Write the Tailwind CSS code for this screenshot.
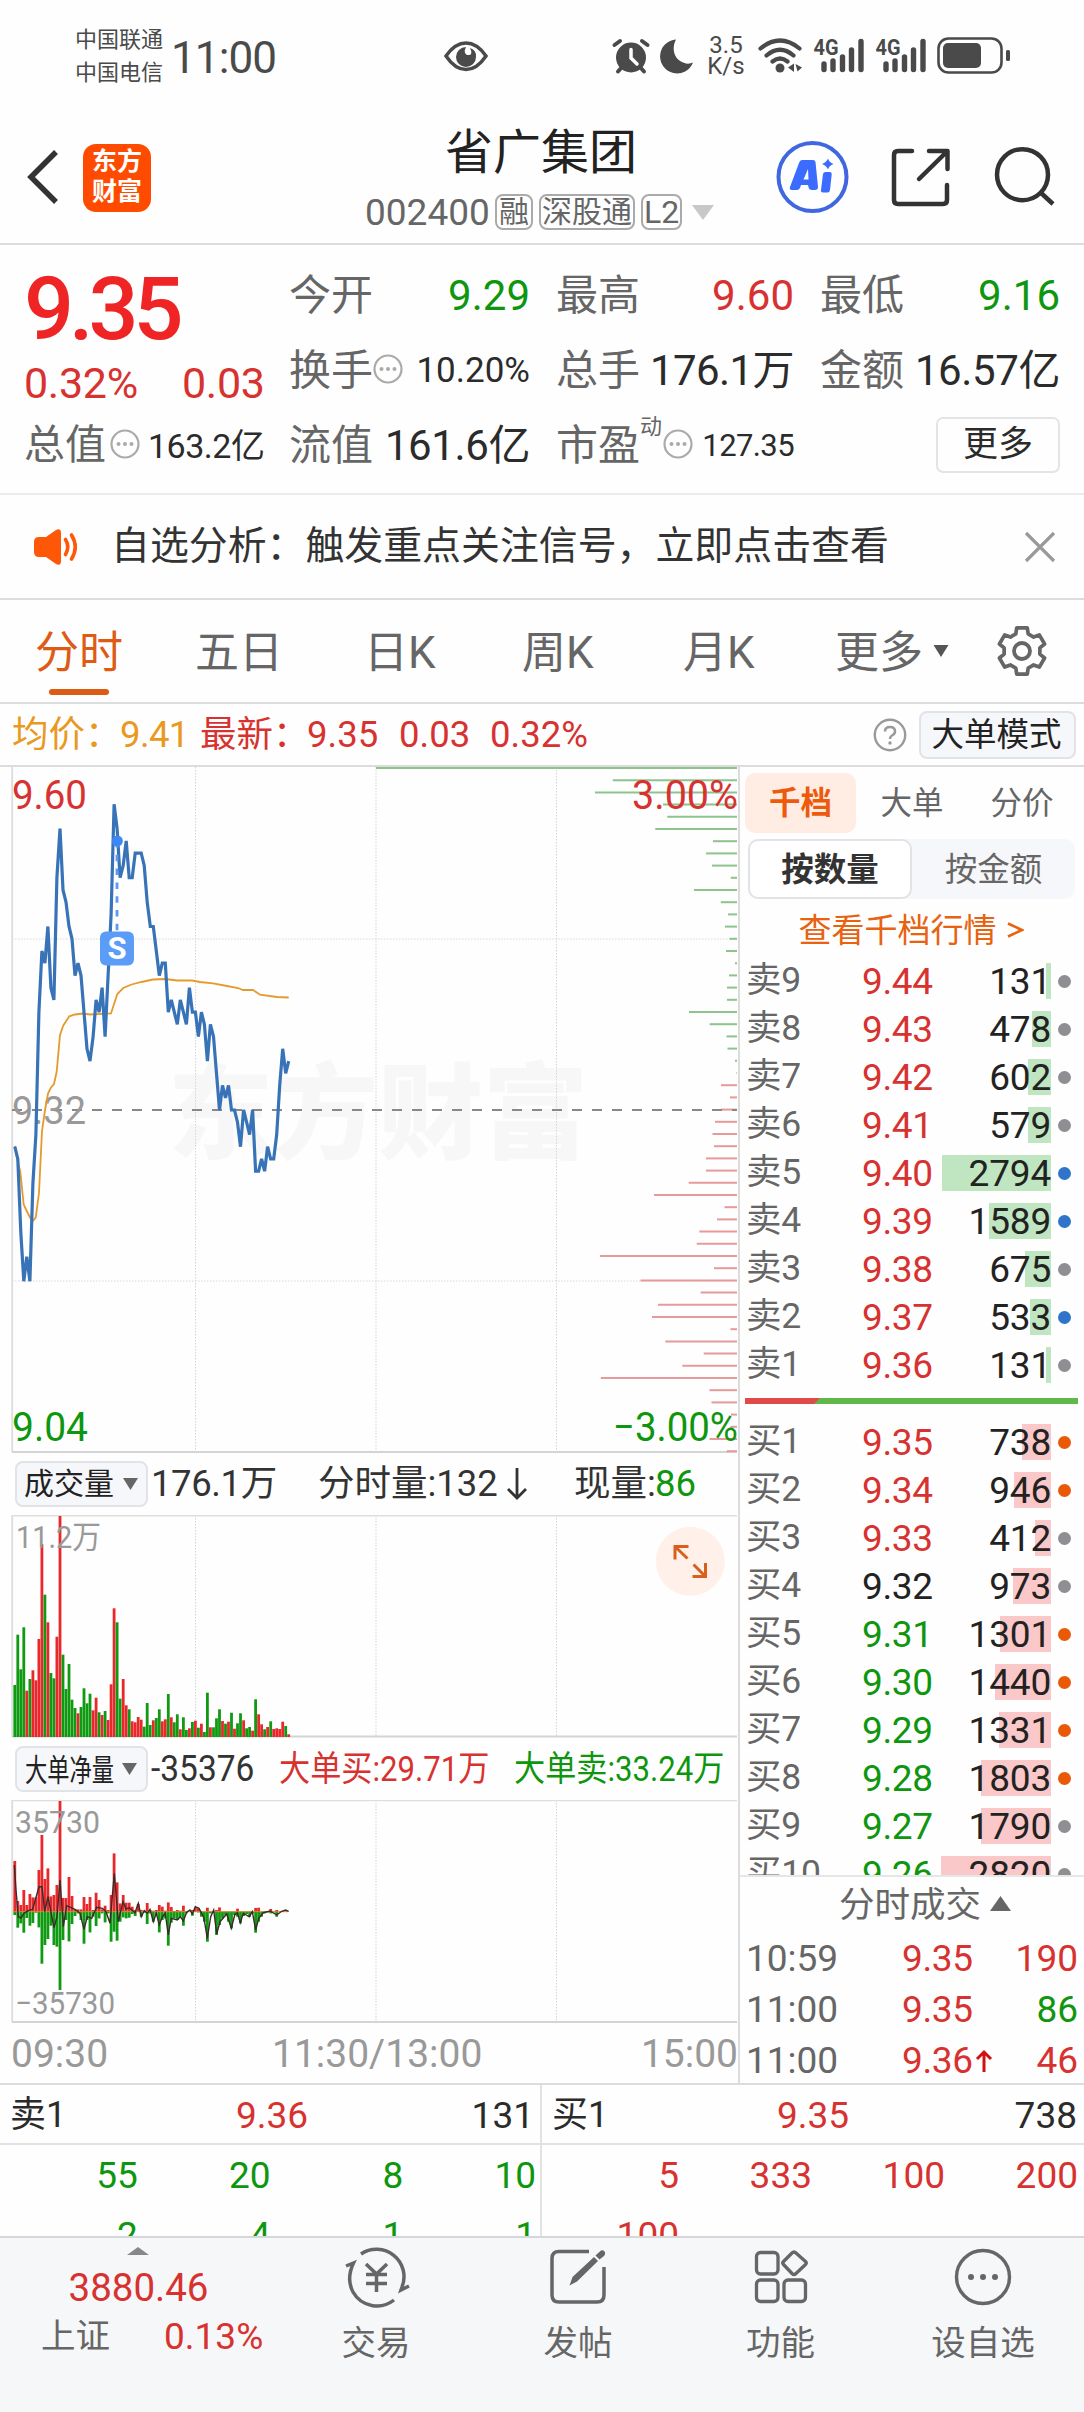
<!DOCTYPE html>
<html lang="zh-CN">
<head>
<meta charset="utf-8">
<title>省广集团 002400</title>
<script src="https://cdn.jsdelivr.net/npm/@tailwindcss/browser@4"></script>
</head>
<body class="bg-white">
<div class="w-[1084px] h-[2412px] overflow-hidden flex flex-col bg-[#fefefe] text-[#2b2b2b] leading-none whitespace-nowrap font-['Roboto','Noto_Sans_CJK_SC',sans-serif]">

  <!-- status bar -->
  <div class="h-[112px] shrink-0 flex items-center pl-[75px] text-[#4a4a4a]">
    <div class="w-[96px] text-[22px] leading-[33px]"><div>中国联通</div><div>中国电信</div></div>
    <div class="w-[272px] text-[44px] tracking-[-0.9px] pt-[4px]">11:00</div>
    <svg class="w-[46px] h-[34px]" viewBox="443 39 46 34"><path d="M446 56Q455 43 466 43T486 56Q477 69.500 466 69.500T446 56Z" fill="none" stroke="#4a4a4a" stroke-width="3.500"/><path d="M466 47A10 10 0 1 0 476 57A8 8 0 0 0 470 48Q474 56 467 55Q463 53 466 47Z" fill="#4a4a4a"/></svg>
    <svg class="w-[40px] h-[40px] ml-[122px]" viewBox="611 36 40 40"><circle cx="631" cy="57.500" r="15" fill="#4a4a4a"/><path d="M631 49.500V58L637 64" fill="none" stroke="#fff" stroke-width="3.500" stroke-linecap="round"/><path d="M614.500 45L620 41M647.500 45L642 41M618 71.500L622 67M644 71.500L640 67" stroke="#4a4a4a" stroke-width="4" stroke-linecap="round"/></svg>
    <svg class="w-[36px] h-[40px] ml-[8px]" viewBox="659 36 36 40"><path d="M676 39.500A17 17 0 1 0 693 62.500Q690 64 686 63.500C674 61 671 49 676 39.500Z" fill="#4a4a4a"/></svg>
    <div class="w-[62px] text-[24px] leading-[21px] text-center"><div>3.5</div><div>K/s</div></div>
    <svg class="w-[46px] h-[38px] " viewBox="756 37 46 38"><g fill="none" stroke="#4a4a4a" stroke-width="4.200" stroke-linecap="round"><path d="M759.500 48.500Q779 32.500 798.500 48.500M765.500 55.500Q779 44 792.500 55.500M771.500 61.500Q779 55.500 786.500 61.500"/></g><circle cx="779" cy="68" r="4.500" fill="#4a4a4a"/><path d="M787 67.500L793 63.500V72ZM794.500 64L801 67.500L796.500 71.500Z" fill="#4a4a4a"/></svg>
    <svg class="w-[52px] h-[38px] ml-[10px] overflow-visible" viewBox="812 37 52 38"><text x="812.500" y="55" font-size="22" font-weight="700" textLength="25" lengthAdjust="spacingAndGlyphs" fill="#4a4a4a">4G</text><path d="M823 64V69.500M832 61V69.500M841.500 57V69.500M850.500 50V69.500M860 41.500V69.500" stroke="#4a4a4a" stroke-width="5.400" stroke-linecap="round"/></svg>
    <svg class="w-[52px] h-[38px] ml-[10px] overflow-visible" viewBox="812 37 52 38"><text x="812.500" y="55" font-size="22" font-weight="700" textLength="25" lengthAdjust="spacingAndGlyphs" fill="#4a4a4a">4G</text><path d="M823 64V69.500M832 61V69.500M841.500 57V69.500M850.500 50V69.500M860 41.500V69.500" stroke="#4a4a4a" stroke-width="5.400" stroke-linecap="round"/></svg>
    <svg class="w-[76px] h-[40px] ml-[9px]" viewBox="936 36 76 40"><rect x="938.500" y="38.500" width="63" height="34" rx="10" fill="none" stroke="#4a4a4a" stroke-width="2.600"/><rect x="943" y="43" width="38" height="25" rx="5" fill="#4a4a4a"/><rect x="1006" y="50" width="4" height="11" rx="1.500" fill="#4a4a4a"/></svg>
  </div>

  <!-- title bar -->
  <div class="h-[133px] shrink-0 flex border-b-2 border-[#dcdcdc]">
    <svg class="w-[60px] h-[133px]" viewBox="0 112 60 133"><path d="M56 152L31 177L56 202" fill="none" stroke="#333" stroke-width="5.500"/></svg>
    <div class="ml-[23px] mt-[32px] w-[68px] h-[68px] rounded-[13px] bg-[#ff4b00] text-white text-[25px] font-bold leading-[30px] pt-[3px] text-center">东方<br>财富</div>
    <div class="ml-[211px] w-[356px] flex flex-col pt-[15px]">
      <div class="text-[48px] h-[52px] leading-[52px] pl-[83px] text-[#222]">省广集团</div>
      <div class="flex items-center h-[36px] mt-[15px] pl-[3px] text-[#666]">
        <span class="w-[130px] text-[37px]">002400</span>
        <span class="w-[38px] h-[36px] border-2 border-[#aaa] rounded-[8px] text-[30px] flex items-center justify-center">融</span>
        <span class="ml-[6px] w-[96px] h-[36px] border-2 border-[#aaa] rounded-[8px] text-[30px] flex items-center justify-center">深股通</span>
        <span class="ml-[6px] w-[41px] h-[36px] border-2 border-[#aaa] rounded-[8px] text-[32px] flex items-center justify-center">L2</span>
        <svg class="ml-[10px] w-[22px] h-[15px]" viewBox="0 0 22 15"><path d="M0 0H22L11 15Z" fill="#c8c8c8"/></svg>
      </div>
    </div>
    <svg class="ml-[56px] w-[76px] h-[131px]" viewBox="774 112 76 131"><circle cx="812.500" cy="177" r="34" fill="none" stroke="#4067e0" stroke-width="4"/><path fill="#3b6bff" fill-rule="evenodd" d="M802 160H813Q815 160 815.500 162L818 187Q818 190 815 190H812Q809 190 808.500 187L808 185H801L800 188Q799 190 797 190H792Q789 190 790 187L799 163Q800 160 802 160ZM808 169L803.500 179.500H808.500ZM823 174Q823.500 172 825.500 172H830Q832 172 831.700 174.500L830 190Q829.500 192.500 827.500 192.500H823Q820.700 192.500 821 190ZM828 158.500Q829 162 833.500 164Q829 165.500 828 169.500Q826.500 165.500 822 164Q826.500 162 828 158.500Z"/></svg>
    <svg class="ml-[37px] w-[70px] h-[131px]" viewBox="887 112 70 131"><g fill="none" stroke="#333" stroke-width="4.500" stroke-linecap="round" stroke-linejoin="round"><path d="M912 151H898Q894 151 894 155V200Q894 204 898 204H943Q947 204 947 200V185"/><path d="M929 151H947.500V169M946 152.500L919 179"/></g></svg>
    <svg class="ml-[33px] w-[74px] h-[131px]" viewBox="990 112 74 131"><circle cx="1022.500" cy="174.700" r="25.500" fill="none" stroke="#333" stroke-width="4.500"/><path d="M1040 192L1053 204" stroke="#333" stroke-width="4.500"/></svg>
  </div>

  <!-- quote summary -->
  <div class="h-[250px] shrink-0 flex pt-[13px] pl-[24px] border-b-2 border-[#ebebeb] text-[42px]">
    <div class="w-[265px] shrink-0">
      <div class="h-[101px] flex items-center text-[88px] font-medium tracking-[-5px] text-[#ee2524]">9.35</div>
      <div class="h-[49px] flex items-center text-[#d73230]"><span class="w-[158px] text-[43px] tracking-[-0.3px]">0.32%</span><span class="text-[43px] tracking-[-0.3px]">0.03</span></div>
      <div class="h-[75px] flex items-center"><span class="text-[#666] w-[86px] text-[41px]">总值</span><svg class="w-[30px] h-[30px] -mt-1" viewBox="0 0 30 30"><circle cx="15" cy="15" r="13.500" fill="none" stroke="#aaa" stroke-width="2.200"/><g fill="#aaa"><circle cx="8.500" cy="15" r="2"/><circle cx="15" cy="15" r="2"/><circle cx="21.500" cy="15" r="2"/></g></svg><span class="ml-[8px] text-[34px] tracking-[-0.5px]">163.2亿</span></div>
    </div>
    <div class="grid grid-cols-[241px_238px_240px] gap-x-[26px] auto-rows-[75px] [&>div]:flex [&>div]:items-center [&>div]:justify-between">
      <div><span class="text-[#666]">今开</span><span class="text-[#0f960f]">9.29</span></div>
      <div><span class="text-[#666]">最高</span><span class="text-[#d73230]">9.60</span></div>
      <div><span class="text-[#666]">最低</span><span class="text-[#0f960f]">9.16</span></div>
      <div><span class="text-[#666]">换手</span><svg class="w-[30px] h-[30px] -mt-1" viewBox="0 0 30 30"><circle cx="15" cy="15" r="13.500" fill="none" stroke="#aaa" stroke-width="2.200"/><g fill="#aaa"><circle cx="8.500" cy="15" r="2"/><circle cx="15" cy="15" r="2"/><circle cx="21.500" cy="15" r="2"/></g></svg><span class="ml-auto text-[35px]">10.20%</span></div>
      <div><span class="text-[#666]">总手</span><span class="tracking-[-0.6px]">176.1万</span></div>
      <div><span class="text-[#666]">金额</span><span class="tracking-[-0.4px]">16.57亿</span></div>
      <div><span class="text-[#666]">流值</span><span class="tracking-[-0.4px]">161.6亿</span></div>
      <div><span class="text-[#666]">市盈</span><span class="text-[#666] text-[22px] -mt-[38px]">动</span><svg class="w-[30px] h-[30px] -mt-1 ml-[1px]" viewBox="0 0 30 30"><circle cx="15" cy="15" r="13.500" fill="none" stroke="#aaa" stroke-width="2.200"/><g fill="#aaa"><circle cx="8.500" cy="15" r="2"/><circle cx="15" cy="15" r="2"/><circle cx="21.500" cy="15" r="2"/></g></svg><span class="ml-auto text-[31px] tracking-[-0.6px]">127.35</span></div>
      <div><span class="ml-auto -mt-[2px] w-[124px] h-[56px] border-2 border-[#e4e4e4] rounded-[7px] flex items-center justify-center text-[35px]">更多</span></div>
    </div>
  </div>

  <!-- notice -->
  <div class="h-[105px] shrink-0 flex items-center pl-[32px] border-b-2 border-[#dcdcdc]">
    <svg class="w-[50px] h-[44px]" viewBox="32 524 50 44"><path d="M34 541Q34 536 39 536H46L56 529Q61 526.500 61 532V560Q61 565.500 56 563L46 556H39Q34 556 34 551Z" fill="#ff5708"/><path d="M65.500 538.500Q70 546 65.500 553.500M71.500 534Q79 546 71.500 558" fill="none" stroke="#ff5708" stroke-width="3.600" stroke-linecap="round"/></svg>
    <span class="ml-[29px] text-[38.9px] text-[#333]">自选分析：触发重点关注信号，立即点击查看</span>
    <svg class="ml-auto mr-[28px] w-[32px] h-[32px]" viewBox="0 0 32 32"><path d="M2 2L30 30M30 2L2 30" stroke="#999" stroke-width="3.200"/></svg>
  </div>

  <!-- period tabs -->
  <div class="h-[104px] shrink-0 flex items-center border-b-2 border-[#dcdcdc] text-[44px] text-[#666]">
    <div class="w-[160px] pl-[35px] h-full flex flex-col text-[#dd5b14]"><span class="h-[89px] flex items-center pt-[17px]">分时</span><span class="ml-[14px] w-[60px] h-[6px] rounded-full bg-[#dd5b14]"></span></div>
    <div class="w-[203px] pl-[35px] pt-[3px]">五日</div>
    <div class="w-[159px] pl-[1px] pt-[3px]">日K</div>
    <div class="w-[161px] pt-[3px]">周K</div>
    <div class="w-[152px] pt-[3px]">月K</div>
    <div class="w-[98px] pt-[3px]">更多</div>
    <svg class="w-[16px] h-[12px]" viewBox="0 0 16 12"><path d="M0.500 0H15.500L8 12Z" fill="#555"/></svg>
    <svg class="ml-[45px] w-[56px] h-[56px]" viewBox="-28 -28 56 56"><path transform="scale(.93)" d="M-6.700-18.300L-5.700-24.800H5.700L6.700-18.300L12.500-14.950L18.600-17.300L24.300-7.500L19.200-3.350V3.350L24.300 7.500L18.600 17.300L12.500 14.950L6.700 18.300L5.700 24.800H-5.700L-6.700 18.300L-12.500 14.950L-18.600 17.300L-24.300 7.500L-19.200 3.350V-3.350L-24.300-7.500L-18.600-17.300L-12.500-14.950Z" fill="none" stroke="#666" stroke-width="4" stroke-linejoin="round"/><circle r="8" fill="none" stroke="#666" stroke-width="3.800"/></svg>
  </div>

  <!-- average / latest -->
  <div class="h-[63px] shrink-0 flex items-center pl-[12px] border-b-2 border-[#dcdcdc] text-[36.500px] text-[#d73230]">
    <span class="w-[108px] pt-[2px] text-[#e8991e]">均价：</span><span class="w-[80px] pt-[2px] text-[#e8991e] tracking-[-0.6px]">9.41</span>
    <span class="w-[107px] pt-[2px]">最新：</span><span class="w-[92px] pt-[2px]">9.35</span><span class="w-[91px] pt-[2px]">0.03</span><span class="pt-[2px]">0.32%</span>
    <svg class="ml-auto w-[34px] h-[34px]" viewBox="0 0 34 34"><circle cx="17" cy="17" r="15.200" fill="none" stroke="#999" stroke-width="2.400"/><path d="M12 13.500Q12 9 17 9T22 13.500Q22 16 19 17.500Q17 18.500 17 21" fill="none" stroke="#999" stroke-width="2.500"/><circle cx="17" cy="25" r="1.700" fill="#999"/></svg>
    <span class="ml-[12px] mr-[8px] w-[157px] h-[48px] rounded-[8px] border-2 border-[#e2e3e6] bg-[#f6f7fa] text-[#222] text-[32.500px] flex items-center justify-center pt-[2px] pr-[2px]">大单模式</span>
  </div>

  <!-- charts and order book -->
  <div class="h-[1318px] shrink-0 flex border-b-2 border-[#dcdcdc]">
    <div class="w-[740px] shrink-0 flex flex-col border-r-2 border-[#dcdcdc]">
      <svg id="price" class="w-[738px] h-[686px] shrink-0" viewBox="0 767 738 686"></svg>
      <div class="h-[62px] flex items-center pl-[15px] text-[36.500px] text-[#333]">
        <div class="w-[133px] h-[46px] border-2 border-[#e2e3e6] bg-[#f6f7fa] rounded-[8px] flex items-center pl-[7px] text-[30px] text-[#222]">成交量<svg class="ml-[9px] w-[15px] h-[12px]" viewBox="0 0 15 12"><path d="M0 0H15L7.500 12Z" fill="#666"/></svg></div>
        <span class="ml-[3px] w-[167px] pt-[1px] tracking-[-0.4px]">176.1万</span>
        <span class="w-[188px] pt-[1px]">分时量:132</span>
        <svg class="w-[22px] h-[34px]" viewBox="0 0 22 34"><path d="M11 1V31M2 22L11 31L20 22" fill="none" stroke="#333" stroke-width="2.800"/></svg>
        <span class="ml-[46px] w-[81px] pt-[1px]">现量:</span><span class="text-[#0f960f] pt-[1px]">86</span>
      </div>
      <svg id="volume" class="w-[738px] h-[223px] shrink-0" viewBox="0 1515 738 223"></svg>
      <div class="h-[62px] flex items-center pl-[15px] text-[35px]">
        <div class="w-[133px] h-[46px] border-2 border-[#e2e3e6] bg-[#f6f7fa] rounded-[8px] flex items-center pl-[8px] text-[#222]"><span class="w-[90px]"><span class="inline-block origin-left scale-x-[0.73] text-[30.500px]">大单净量</span></span><svg class="ml-[7px] w-[15px] h-[12px]" viewBox="0 0 15 12"><path d="M0 0H15L7.500 12Z" fill="#666"/></svg></div>
        <span class="ml-[3px] w-[128px] text-[#333]"><span class="inline-block origin-left scale-x-[0.93] text-[36px]">-35376</span></span>
        <span class="w-[235px] text-[#d73230]"><span class="inline-block origin-left scale-x-[0.89]">大单买:29.71万</span></span>
        <span class="text-[#0f960f] w-[200px]"><span class="inline-block origin-left scale-x-[0.89]">大单卖:33.24万</span></span>
      </div>
      <svg id="net" class="w-[738px] h-[223px] shrink-0" viewBox="0 1800 738 223"></svg>
      <div class="h-[60px] flex items-center justify-between pl-[11px] pt-[3px] text-[39px] text-[#999]"><span class="w-[261px]">09:30</span><span class="mr-auto">11:30/13:00</span><span>15:00</span></div>
    </div>

    <div class="flex-1 flex flex-col">
      <div class="flex h-[60px] shrink-0 mt-[6px] pl-[5px] text-[31.500px] text-[#666]">
        <span class="w-[111px] bg-[#ffede4] rounded-[10px] flex items-center justify-center pt-[2px] font-bold text-[#ee5a0c]">千档</span>
        <span class="w-[112px] flex items-center justify-center pt-[2px]">大单</span>
        <span class="w-[108px] flex items-center justify-center pt-[2px]">分价</span>
      </div>
      <div class="flex h-[60px] shrink-0 mt-[6px] ml-[8px] w-[327px] rounded-[10px] bg-[#f6f7fa] text-[32.500px]">
        <span class="w-[164px] bg-white border-2 border-[#e2e3e6] rounded-[10px] flex items-center justify-center pt-[2px] font-bold text-[#333]">按数量</span>
        <span class="flex-1 flex items-center justify-center pt-[2px] text-[#666]">按金额</span>
      </div>
      <div class="h-[58px] shrink-0 flex items-center justify-center gap-[10px] pr-[2px] pt-[4px] text-[33px] text-[#e8620f]"><span>查看千档行情</span><svg class="w-[17px] h-[18px]" viewBox="0 0 17 18"><path d="M1 2.500L15 9L1 15.500" fill="none" stroke="#e8620f" stroke-width="2.600"/></svg></div>
      <div id="asks" class="shrink-0"></div>
      <div class="mt-[9px] ml-[5px] w-[333px] h-[6px] shrink-0 flex bg-[#61b84a]"><svg class="w-[75px] h-[6px]" viewBox="0 0 75 6"><path d="M0 0H75L69 6H0Z" fill="#e04a4a"/></svg></div>
      <div id="bids" class="mt-[14px] h-[459px] shrink-0 overflow-hidden border-b-2 border-[#e6e6e6]"></div>
      <div class="h-[56px] shrink-0 flex items-center justify-center gap-[9px] pl-[26px] pt-[2px] text-[35.500px] text-[#666]">分时成交<svg class="w-[21px] h-[15px] -mt-[6px]" viewBox="0 0 21 15"><path d="M0 15L10.500 0L21 15Z" fill="#666"/></svg></div>
      <div id="trades" class="shrink-0"></div>
    </div>
  </div>

  <!-- queue detail -->
  <div class="h-[151px] shrink-0 grid grid-cols-[542px_542px] overflow-hidden text-[37px]">
    <div class="border-r-2 border-[#e2e2e2]">
      <div class="h-[60px] flex items-center pt-[2px] pl-[10px] pr-[6px] border-b-2 border-[#e2e2e2]"><span class="w-[226px] text-[36px]">卖1</span><span class="text-[#d73230]">9.36</span><span class="ml-auto">131</span></div>
      <div class="grid grid-cols-4 auto-rows-[60px] items-center text-right text-[#0f960f] pl-[5px] pr-[4px]"><span>55</span><span>20</span><span>8</span><span>10</span><span>2</span><span>4</span><span>1</span><span>1</span></div>
    </div>
    <div>
      <div class="h-[60px] flex items-center pt-[2px] pl-[10px] pr-[7px] border-b-2 border-[#e2e2e2]"><span class="w-[225px] text-[36px]">买1</span><span class="text-[#d73230]">9.35</span><span class="ml-auto">738</span></div>
      <div class="grid grid-cols-4 auto-rows-[60px] items-center text-right text-[#d73230] pl-[4px] pr-[6px]"><span>5</span><span>333</span><span>100</span><span>200</span><span>100</span></div>
    </div>
  </div>

  <!-- bottom navigation -->
  <div class="flex-1 flex border-t-2 border-[#d6d7da] bg-[#f6f7f9] text-[#666] text-[34.500px]">
    <div class="w-[275px] pt-[9px] flex flex-col items-center">
      <svg class="w-[22px] h-[8px]" viewBox="0 0 22 8"><path d="M0 8L11 0L22 8Z" fill="#888"/></svg>
      <div class="mt-[13px] pl-[2px] text-[38.500px] h-[40px] flex items-center text-[#d73230]">3880.46</div>
      <div class="mt-[7px] h-[42px] w-full flex items-center pl-[41px]"><span class="w-[123px]">上证</span><span class="text-[#d73230] text-[37px]">0.13%</span></div>
    </div>
    <div class="w-[202px] pt-[8px] flex flex-col items-center">
      <svg class="w-[68px] h-[62px]" viewBox="342 2245 68 62"><g fill="none" stroke="#666" stroke-width="3.500"><path d="M361 2253A27.500 27.500 0 0 1 402 2286M346 2265L353.500 2262Q346 2278 353 2291A27.500 27.500 0 0 0 394 2299M402 2286L401 2289L409 2285"/><path d="M366 2263L376.500 2273L387 2263M376.500 2273V2291M366 2273.500H387M366 2282.500H387"/></g></svg>
      <span class="mt-[18px]">交易</span>
    </div>
    <div class="w-[202px] pt-[8px] flex flex-col items-center">
      <svg class="w-[62px] h-[62px]" viewBox="548 2245 62 62"><path d="M590 2250.500H560Q553 2250.500 553 2257.500V2294Q553 2301 560 2301H598Q605 2301 605 2294V2266" fill="none" stroke="#666" stroke-width="3.500"/><path d="M570.500 2284.500L573.500 2276L595 2256L599 2260L578 2280.500ZM596.500 2254.500L602 2249.500Q604 2248.500 605.500 2250.500T605 2255L600.500 2258.500Z" fill="#666"/></svg>
      <span class="mt-[18px]">发帖</span>
    </div>
    <div class="w-[203px] pt-[8px] flex flex-col items-center">
      <svg class="w-[62px] h-[62px]" viewBox="750 2245 62 62"><g fill="none" stroke="#666" stroke-width="3.300" stroke-linejoin="round"><rect x="756.500" y="2251.500" width="21.500" height="21.500" rx="4"/><rect x="756.500" y="2279" width="21.500" height="21.500" rx="4"/><rect x="784" y="2279" width="21.500" height="21.500" rx="4"/><path d="M792 2252Q794 2250 796 2252L805.500 2260.500Q807 2262 805.500 2263.500L796 2272.500Q794 2274.500 792 2272.500L783.500 2263.500Q782 2262 783.500 2260.500Z"/></g></svg>
      <span class="mt-[18px]">功能</span>
    </div>
    <div class="w-[202px] pt-[8px] flex flex-col items-center">
      <svg class="w-[62px] h-[62px]" viewBox="-31 -31 62 62"><circle r="26.500" fill="none" stroke="#666" stroke-width="3.400"/><g fill="#666"><circle cx="-12" r="3"/><circle r="3"/><circle cx="12" r="3"/></g></svg>
      <span class="mt-[18px]">设自选</span>
    </div>
  </div>
</div>

<script>
const RED = '#e9282b', GREEN = '#0f9a12';
const X = i => 14.8 + 3.01 * i;
const line = (x1, y1, x2, y2, s, extra = '') => `<line x1="${x1}" y1="${y1}" x2="${x2}" y2="${y2}" stroke="${s}" ${extra}/>`;
const label = (x, y, size, w, fill, t, anchor = 'start') => `<text x="${x}" y="${y}" font-size="${size}" textLength="${w}" lengthAdjust="spacingAndGlyphs" fill="${fill}" text-anchor="${anchor}">${t}</text>`;
const verticals = (a, b) => [195.5, 376, 556.5].map(x => line(x, a, x, b, '#d4d4d4', 'stroke-dasharray="1.5 1.5"')).join('');

// price: minute closes in cents relative to 9.32
const px = [-3,-4,-10,-14,-12,-14,-6,-2,8,13,12,15,10,9,19,23,18,17,15,14,11,12,11,8,5,4,6,9,8,10,6,11,16,25,23,19,20,22,19,19,21,21,21,20,17,15,15,13,11,12,12,8,9,8,7,9,8,7,10,8,8,6,8,7,4,7,6,3,0,2,1,2,0,0,-1,-3,0,-1,-2,0,-5,-5,-4,-5,-3,-4,-4,-2,2,5,3,4];
const avg = [[15,1146],[17,1158],[20.3,1172],[23.7,1204.5],[26.7,1211],[30,1217.5],[32.7,1221],[35.7,1217.500],[39,1193],[42,1131],[45,1110],[48,1093.500],[51,1087.500],[54,1084],[56.700,1071.500],[60,1035],[63.300,1025.500],[69.300,1016.300],[75,1014.500],[83,1013.500],[90,1014.500],[111,1013.500],[117.300,994],[123.300,988],[131.500,984.500],[141.500,982],[153,979.500],[165,979],[177,980.500],[192,980.500],[200,982],[213,983.300],[227,986],[238,988],[243,990],[253,990],[260,994.700],[277,997],[288.700,997.500]];
// resting size per price level, left edge of each stroke
const depth = [376,612.800,595,663,667.300,655.300,713,706,712,730.800,694,720.800,728,725,729.500,726,735,729,727,727,689,709.700,726.500,727.500,735,736.500,721,730,721,715,712.500,714,706,706,688.700,654,724.500,717,699.300,696.700,600,714,640.500,700.700,658,652,730.500,665.300,703.700,682.300,600.800,709.500,711.500,731,730.500,709.500,726.800];
document.getElementById('price').innerHTML =
  `<text x="168" y="1151" font-size="104" font-weight="900" textLength="420" lengthAdjust="spacingAndGlyphs" fill="#f7f7f7">东方财富</text>` +
  verticals(767, 1452) + [939, 1281].map(y => line(12, y, 737, y, '#d8d8d8', 'stroke-dasharray="1.5 1.5"')).join('') +
  line(12.2, 767, 12.2, 1452, '#dcdcdc', 'stroke-width="1.8"') + line(12, 1452, 737, 1452, '#d4d4d4', 'stroke-width="2"') +
  depth.map((x, k) => line(x, (768 + 12.2 * k).toFixed(1), 737, (768 + 12.2 * k).toFixed(1), k < 26 ? '#8cc48c' : '#e69a9a', 'stroke-width="2"')).join('') +
  line(12, 1110, 737, 1110, '#888', 'stroke-width="2" stroke-dasharray="10 10"') +
  label(12, 1124, 39, 74, '#999', '9.32') +
  `<polyline points="${avg.map(p => p.join()).join(' ')}" fill="none" stroke="#e59a2d" stroke-width="1.8"/>` +
  `<polyline points="${px.map((v, i) => X(i).toFixed(1) + ',' + (1110 - v * 12.23).toFixed(1)).join(' ')}" fill="none" stroke="#3873b8" stroke-width="3.2" stroke-linejoin="miter" stroke-miterlimit="1.5"/>` +
  line(117, 841, 117, 931, '#5d9af0', 'stroke-width="2.8" stroke-dasharray="6.5 7.3"') +
  `<circle cx="117.300" cy="841" r="5.500" fill="#3d86f5"/><rect x="100" y="931.500" width="34" height="34" rx="6" fill="#5b9cf8"/>` +
  `<text x="117" y="959" font-size="31" font-weight="700" text-anchor="middle" fill="#fff">S</text>` +
  label(12, 809, 40, 75, '#d73230', '9.60') + label(12, 1440.500, 40, 76, '#0f960f', '9.04') +
  label(738, 809, 40, 106, '#d73230', '3.00%', 'end') + label(738, 1440.500, 40, 125, '#0f960f', '−3.00%', 'end');

// volume: height followed by direction of the minute
const vol = '156g307g203g329g139r174g200r170r294r578r427g344r192g176g301r663r247g144g219g112g87g71r90g146g101g130g80r118r74g66r78g51r158r386r344g115g174r95r83g47r44r60r52r31g102g36g50r57g83g47r53r129g59r44g68g23r59g21g26r45g49r28g40r15g133g29r29g56g83g48r40g46r73g25r41g71g50r26g30g19r113g68r38r23g30r47g24r26r24r46r33g8r'.match(/\d+[rg]/g);
document.getElementById('volume').innerHTML =
  verticals(1515, 1737) + line(12, 1515.8, 737, 1515.8, '#dedede', 'stroke-width="1.5"') + line(12.2, 1515, 12.2, 1737, '#dcdcdc', 'stroke-width="1.8"') + line(12, 1736.5, 737, 1736.5, '#d4d4d4', 'stroke-width="2"') +
  vol.map((v, i) => { const h = parseInt(v) / 3; return `<rect x="${(X(i) - 1.4).toFixed(1)}" y="${(1737 - h).toFixed(1)}" width="2.8" height="${h.toFixed(1)}" fill="${v.endsWith('r') ? RED : GREEN}"/>`; }).join('') +
  label(16, 1548, 31.5, 85, '#999', '11.2万') +
  `<circle cx="690.300" cy="1561.300" r="34.500" fill="#fff1ea"/><path d="M675 1559.500V1546.500H688.500M675.500 1547L687.500 1558.500M692.500 1576.500H705.500V1563M693.500 1564.500L705 1576" fill="none" stroke="#d9601c" stroke-width="3"/>`;

// large-order buy / sell per minute
const buy = [152,32,20,65,20,53,43,43,125,230,98,130,46,50,80,332,41,41,104,47,7,7,7,44,23,44,5,57,35,7,18,5,50,175,88,25,50,27,27,15,5,23,5,3,26,5,3,5,20,15,3,28,14,2,5,3,18,0,0,5,12,10,0,0,12,0,0,5,13,0,0,0,0,0,9,0,0,0,0,0,11,12,0,0,0,8,0,5,0,0,0,0];
const sell = [10,48,35,63,19,42,34,3,47,156,100,82,42,100,105,235,85,25,89,37,13,5,25,96,25,62,15,43,20,5,32,5,90,60,87,30,17,20,18,7,13,0,15,3,37,5,30,13,62,25,20,102,33,20,25,15,42,5,0,12,0,2,15,30,90,5,3,70,40,20,10,30,50,10,15,35,13,7,15,5,63,30,15,5,2,5,2,15,0,0,0,0];
const net = [43,375,48,450,55,530,63,534,72,520,85,512,98,508,117,440,126,440,134,515,144,470,162,563,171,530,180,420,190,560,200,497,225,508,240,520,252,568,262,530,275,535,290,502,307,505,318,515,330,550,343,400,355,545,369,485,378,507,388,503,405,518,415,490,424,530,433,512,442,520,450,508,460,545,469,520,478,555,487,530,496,520,505,585,514,535,532,540,541,530,550,543,560,517,570,510,577,522,586,500,597,505,605,520,612,535,622,595,632,530,641,510,650,582,660,545,680,522,694,565,704,525,712,518,721,548,730,520,739,525,748,530,757,515,767,570,776,535,790,518,810,513,830,525,845,514,857,510,866,514];
document.getElementById('net').innerHTML =
  verticals(1800, 2022) + line(12, 1800.6, 737, 1800.6, '#dedede', 'stroke-width="1.5"') + line(12.2, 1800, 12.2, 2022, '#dcdcdc', 'stroke-width="1.8"') + line(12, 2022, 737, 2022, '#d4d4d4', 'stroke-width="2"') +
  buy.map((b, i) => `<rect x="${(X(i) - 1.4).toFixed(1)}" y="${(1911.7 - b / 3).toFixed(1)}" width="2.8" height="${(b / 3).toFixed(1)}" fill="${RED}"/><rect x="${(X(i) - 1.4).toFixed(1)}" y="1911.700" width="2.8" height="${(sell[i] / 3).toFixed(1)}" fill="${GREEN}"/>`).join('') +
  line(13, 1911.700, 288, 1911.700, '#c98a2a', 'stroke-width="1"') +
  `<polyline points="${net.map((v, i) => (i % 2 ? 1740 + v / 3 : v / 3).toFixed(1)).join(' ')}" fill="none" stroke="#3a2a2a" stroke-width="1.4"/>` +
  label(15, 1833, 31.5, 85, '#999', '35730') + label(15, 2014, 31.5, 100, '#999', '−35730');

// order book
const dots = { n: 'bg-[#8e8e93]', b: 'bg-[#2f74c8]', o: 'bg-[#ea5a06]' };
const tone = p => p > 9.32 ? 'text-[#d73230]' : p < 9.32 ? 'text-[#0f960f]' : 'text-[#222]';
const row = (name, price, qty, dot, bar) => `<div class="h-[48px] flex items-center pl-[6px] text-[37px] tracking-[-0.2px]">
  <span class="w-[116px] text-[35.5px] text-[#666]">${name}</span><span class="w-[80px] tracking-[-0.4px] ${tone(+price)}">${price}</span>
  <span class="relative w-[109px] h-[36px] flex items-center justify-end text-[#222]"><i class="absolute right-0 top-0 h-[36px] ${bar}" style="width:${Math.max(5, qty * 0.039)}px"></i><b class="relative font-normal">${qty}</b></span>
  <i class="ml-[7px] w-[13px] h-[13px] rounded-full ${dots[dot]}"></i></div>`;
document.getElementById('asks').innerHTML = [['9.44',131,'n'],['9.43',478,'n'],['9.42',602,'n'],['9.41',579,'n'],['9.40',2794,'b'],['9.39',1589,'b'],['9.38',675,'n'],['9.37',533,'b'],['9.36',131,'n']]
  .map((r, i) => row('卖' + (9 - i), r[0], r[1], r[2], 'bg-[#bfe6c0]')).join('');
document.getElementById('bids').innerHTML = [['9.35',738,'o'],['9.34',946,'o'],['9.33',412,'n'],['9.32',973,'n'],['9.31',1301,'o'],['9.30',1440,'o'],['9.29',1331,'o'],['9.28',1803,'o'],['9.27',1790,'n'],['9.26',2820,'n']]
  .map((r, i) => row('买' + (i + 1), r[0], r[1], r[2], 'bg-[#fac8c8]')).join('');
document.getElementById('trades').innerHTML = [['10:59','9.35','190','text-[#d73230]',''],['11:00','9.35','86','text-[#0f960f]',''],['11:00','9.36','46','text-[#d73230]','<svg class="ml-[2px] w-[18px] h-[24px]" viewBox="0 0 18 24"><path d="M9 23V3M2 10L9 3L16 10" fill="none" stroke="#d01212" stroke-width="3"/></svg>']]
  .map(t => `<div class="h-[51px] flex items-center pl-[6px] pr-[6px] text-[37px]"><span class="w-[156px] text-[#666]">${t[0]}</span><span class="text-[#d73230] tracking-[-0.4px]">${t[1]}</span>${t[4]}<span class="ml-auto ${t[3]}">${t[2]}</span></div>`).join('');
</script>
</body>
</html>
